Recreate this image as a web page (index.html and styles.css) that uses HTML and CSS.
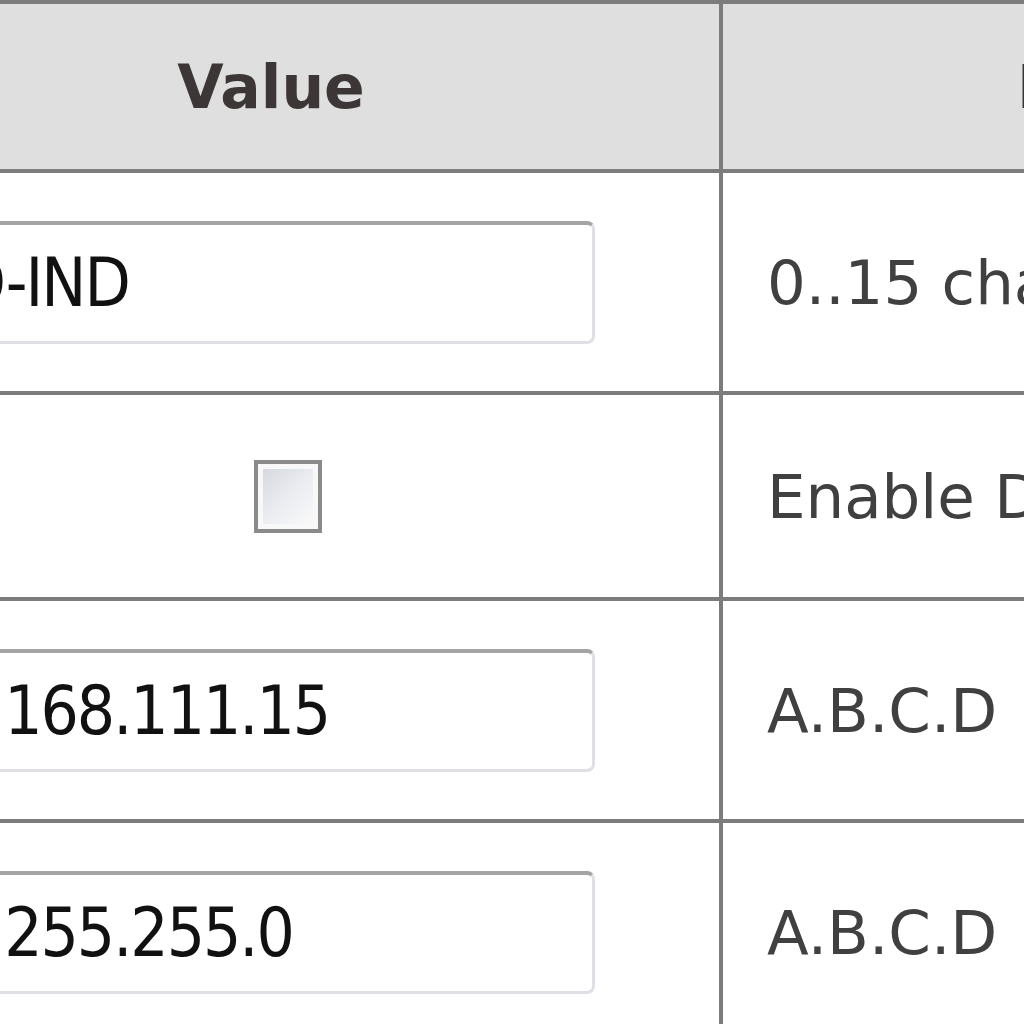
FILE: index.html
```html
<!DOCTYPE html>
<html lang="en">
<head>
    <meta charset="UTF-8">
    <meta name="viewport" content="width=device-width, initial-scale=1.0">
    <title>Network Settings</title>
    <link rel="stylesheet" href="styles.css">
</head>
<body>

<table class="config">
    <colgroup>
        <col class="col-value">
        <col class="col-desc">
    </colgroup>
    <thead>
        <tr>
            <th>Value</th>
            <th>Description</th>
        </tr>
    </thead>
    <tbody>
        <tr class="row-field">
            <td class="val"><input type="text" class="field" value="DEO-IND"></td>
            <td class="desc">0..15 characters</td>
        </tr>
        <tr class="row-check">
            <td class="val center"><input type="checkbox" class="chk"></td>
            <td class="desc">Enable DHCP client</td>
        </tr>
        <tr class="row-field">
            <td class="val"><input type="text" class="field" value="192.168.111.15"></td>
            <td class="desc">A.B.C.D</td>
        </tr>
        <tr class="row-field">
            <td class="val"><input type="text" class="field" value="255.255.255.0"></td>
            <td class="desc">A.B.C.D</td>
        </tr>
    </tbody>
</table>

</body>
</html>
```

FILE: styles.css
```css
body {
    margin: 0;
    padding: 0;
    background-color: white;
    overflow: hidden;
    font-family: "DejaVu Sans", Verdana, sans-serif;
}

.config {
    border-collapse: collapse;
    table-layout: fixed;
    width: 1880px;
    margin-left: -181px;
    margin-top: 0;
}

.col-value {
    width: 900px;
}

.col-desc {
    width: 980px;
}

.config th,
.config td {
    border: 4px solid #7c7c7c;
    padding: 0;
}

.config th {
    height: 165px;
    background-color: #dfdfdf;
    color: #3c3636;
    font-size: 60px;
    font-weight: bold;
    text-align: center;
}

.row-field td {
    height: 218px;
}

.row-check td {
    height: 202px;
}

.config td.desc {
    padding-left: 44px;
    font-size: 61px;
    color: #404040;
    white-space: nowrap;
    overflow: hidden;
}

.config td.center {
    text-align: center;
}

.field {
    box-sizing: border-box;
    width: 748px;
    height: 123px;
    margin-left: 24px;
    padding: 0 0 0 28px;
    border: 3px solid #dfe0e5;
    border-top: 4px solid #a4a4a4;
    border-radius: 8px;
    background-color: white;
    font-family: "DejaVu Sans Condensed", "DejaVu Sans", sans-serif;
    font-stretch: condensed;
    font-size: 67px;
    letter-spacing: -2px;
    color: #111;
    outline: none;
}

.chk {
    appearance: none;
    -webkit-appearance: none;
    box-sizing: border-box;
    width: 68px;
    height: 73px;
    margin: 0 0 0 34px;
    vertical-align: middle;
    border: 4px solid #8a8a8a;
    box-shadow: inset 0 0 0 5px #f8f8f8;
    background: linear-gradient(135deg, #d2d5dc 0%, #eceef2 55%, #fbfbfb 100%);
}
```
